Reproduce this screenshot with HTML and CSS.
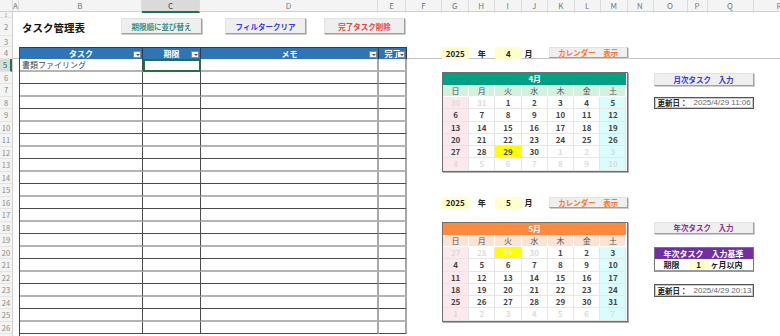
FILE: index.html
```html
<!DOCTYPE html>
<html>
<head>
    <title>タスク管理表</title>
    <link rel="stylesheet" href="styles.css">
</head>
<body>
    <div class="colheads">
        <div></div>
        <div class="col-a">A</div>
        <div>B</div>
        <div class="sel">C</div>
        <div>D</div>
        <div>E</div>
        <div>F</div>
        <div>G</div>
        <div>H</div>
        <div>I</div>
        <div>J</div>
        <div>K</div>
        <div>L</div>
        <div>M</div>
        <div>N</div>
        <div>O</div>
        <div>P</div>
        <div>Q</div>
        <div>R</div>
    </div>
    <div class="main">
        <div class="rowheads">
            <div class="short">1</div><div>2</div><div>3</div><div>4</div>
            <div class="sel">5</div><div>6</div><div>7</div><div>8</div>
            <div>9</div><div>10</div><div>11</div><div>12</div>
            <div>13</div><div>14</div><div>15</div><div>16</div>
            <div>17</div><div>18</div><div>19</div><div>20</div>
            <div>21</div><div>22</div><div>23</div><div>24</div>
            <div>25</div><div>26</div><div></div>
        </div>

        <div class="cells">
            <div class="freeze"></div>

            <!-- row 2: title and macro buttons -->
            <div class="toolbar">
                <div class="title">タスク管理表</div>
                <div class="btn btn-sort">期限順に並び替え</div>
                <div class="btn btn-filter">フィルタークリア</div>
                <div class="btn btn-delete">完了タスク削除</div>
            </div>

            <!-- task table -->
            <div class="tasks">
                <div class="th">タスク<span class="filter"></span></div>
                <div class="th">期限<span class="filter"></span></div>
                <div class="th">メモ<span class="filter"></span></div>
                <div class="th">完了<span class="filter"></span></div>

                <div class="td name">書類ファイリング</div><div class="td active"></div><div class="td"></div><div class="td"></div>
                <div class="td"></div><div class="td"></div><div class="td"></div><div class="td"></div>
                <div class="td"></div><div class="td"></div><div class="td"></div><div class="td"></div>
                <div class="td"></div><div class="td"></div><div class="td"></div><div class="td"></div>
                <div class="td"></div><div class="td"></div><div class="td"></div><div class="td"></div>
                <div class="td"></div><div class="td"></div><div class="td"></div><div class="td"></div>
                <div class="td"></div><div class="td"></div><div class="td"></div><div class="td"></div>
                <div class="td"></div><div class="td"></div><div class="td"></div><div class="td"></div>
                <div class="td"></div><div class="td"></div><div class="td"></div><div class="td"></div>
                <div class="td"></div><div class="td"></div><div class="td"></div><div class="td"></div>
                <div class="td"></div><div class="td"></div><div class="td"></div><div class="td"></div>
                <div class="td"></div><div class="td"></div><div class="td"></div><div class="td"></div>
                <div class="td"></div><div class="td"></div><div class="td"></div><div class="td"></div>
                <div class="td"></div><div class="td"></div><div class="td"></div><div class="td"></div>
                <div class="td"></div><div class="td"></div><div class="td"></div><div class="td"></div>
                <div class="td"></div><div class="td"></div><div class="td"></div><div class="td"></div>
                <div class="td"></div><div class="td"></div><div class="td"></div><div class="td"></div>
                <div class="td"></div><div class="td"></div><div class="td"></div><div class="td"></div>
                <div class="td"></div><div class="td"></div><div class="td"></div><div class="td"></div>
                <div class="td"></div><div class="td"></div><div class="td"></div><div class="td"></div>
                <div class="td"></div><div class="td"></div><div class="td"></div><div class="td"></div>
                <div class="td"></div><div class="td"></div><div class="td"></div><div class="td"></div>
            </div>

            <!-- April -->
            <div class="ym r4 year">2025</div>
            <div class="ym r4 unit-y">年</div>
            <div class="ym r4 month">4</div>
            <div class="ym r4 unit-m">月</div>
            <div class="btn btn-cal r4">カレンダー　表示</div>

            <div class="cal cal-apr">
                <div class="cal-head">4月</div>
                <div class="dow">日</div><div class="dow">月</div><div class="dow">火</div><div class="dow">水</div><div class="dow">木</div><div class="dow">金</div><div class="dow">土</div>
                <div class="sun off">30</div><div class="off">31</div><div>1</div><div>2</div><div>3</div><div>4</div><div class="sat">5</div>
                <div class="sun">6</div><div>7</div><div>8</div><div>9</div><div>10</div><div>11</div><div class="sat">12</div>
                <div class="sun">13</div><div>14</div><div>15</div><div>16</div><div>17</div><div>18</div><div class="sat">19</div>
                <div class="sun">20</div><div>21</div><div>22</div><div>23</div><div>24</div><div>25</div><div class="sat">26</div>
                <div class="sun">27</div><div>28</div><div class="today">29</div><div>30</div><div class="off">1</div><div class="off">2</div><div class="sat off">3</div>
                <div class="sun off">4</div><div class="off">5</div><div class="off">6</div><div class="off">7</div><div class="off">8</div><div class="off">9</div><div class="sat off">10</div>
            </div>

            <div class="btn btn-monthly">月次タスク　入力</div>
            <div class="updated upd-monthly"><b>更新日：</b><span>2025/4/29 11:06</span></div>

            <!-- May -->
            <div class="ym r16 year">2025</div>
            <div class="ym r16 unit-y">年</div>
            <div class="ym r16 month">5</div>
            <div class="ym r16 unit-m">月</div>
            <div class="btn btn-cal r16">カレンダー　表示</div>

            <div class="cal cal-may">
                <div class="cal-head">5月</div>
                <div class="dow">日</div><div class="dow">月</div><div class="dow">火</div><div class="dow">水</div><div class="dow">木</div><div class="dow">金</div><div class="dow">土</div>
                <div class="sun off">27</div><div class="off">28</div><div class="off today">29</div><div class="off">30</div><div>1</div><div>2</div><div class="sat">3</div>
                <div class="sun">4</div><div>5</div><div>6</div><div>7</div><div>8</div><div>9</div><div class="sat">10</div>
                <div class="sun">11</div><div>12</div><div>13</div><div>14</div><div>15</div><div>16</div><div class="sat">17</div>
                <div class="sun">18</div><div>19</div><div>20</div><div>21</div><div>22</div><div>23</div><div class="sat">24</div>
                <div class="sun">25</div><div>26</div><div>27</div><div>28</div><div>29</div><div>30</div><div class="sat">31</div>
                <div class="sun off">1</div><div class="off">2</div><div class="off">3</div><div class="off">4</div><div class="off">5</div><div class="off">6</div><div class="sat off">7</div>
            </div>

            <div class="btn btn-yearly">年次タスク　入力</div>
            <div class="criteria">
                <div class="crit-head">年次タスク　入力基準</div>
                <div class="crit-label">期限</div>
                <div class="crit-value">1</div>
                <div class="crit-unit">ヶ月以内</div>
            </div>
            <div class="updated upd-yearly"><b>更新日：</b><span>2025/4/29 20:13</span></div>
        </div>
    </div>
</body>
</html>
```

FILE: styles.css
```css
* {
    box-sizing: border-box;
}
body {
    margin: 0;
    width: 780px;
    height: 336px;
    overflow: hidden;
    font-family: "Noto Sans CJK JP", "Noto Sans", sans-serif;
    font-size: 8px;
    color: #333;
    background-color: #fff;
}

/* sheet frame: column letters and row numbers */
.colheads {
    display: grid;
    grid-template-columns: 13px 6px 123px 58px 178px 28px 36px repeat(7, 26.5px) 26px 34px 20px 46px 52px;
    height: 12px;
    background-color: #f4f4f4;
    border-bottom: 1px solid #d0d0d0;
}
.colheads div {
    border-right: 1px solid #dcdcdc;
    color: #777;
    font-size: 8px;
    line-height: 11px;
    text-align: center;
    white-space: nowrap;
}
.colheads .col-a {
    text-align: left;
    overflow: visible;
}
.colheads .sel {
    background-color: #dadada;
    border-bottom: 2px solid #217346;
    color: #444;
}
.main {
    display: flex;
    height: 324px;
    overflow: hidden;
}
.rowheads {
    flex: none;
    width: 13px;
    display: grid;
    grid-template-rows: 6px 18px 11px 12px repeat(23, 12.5px);
    background-color: #f4f4f4;
    border-right: 1px solid #d0d0d0;
}
.rowheads div {
    overflow: hidden;
    color: #888;
    font-size: 7.5px;
    text-align: center;
    display: flex;
    align-items: center;
    justify-content: center;
    border-bottom: 1px solid #e4e4e4;
}
.rowheads .short {
    font-size: 5px;
    line-height: 5px;
}
.rowheads .sel {
    background-color: #dadada;
    border-right: 2px solid #217346;
    color: #217346;
}

.cells {
    flex: none;
    display: grid;
    grid-template-columns: 6px 123px 58px 178px 28px 36px repeat(7, 26.5px) 26px 34px 20px 46px 52px;
    grid-template-rows: 6px 18px 11px 12px repeat(23, 12.5px);
}
.freeze {
    grid-column: 1 / -1;
    grid-row: 4;
    border-bottom: 1px solid #c4c4c4;
}

/* title row */
.toolbar {
    grid-column: 2 / 6;
    grid-row: 2;
    display: flex;
    align-items: flex-start;
}
.title {
    width: 102px;
    padding: 1px 0 0 3px;
    font-size: 10.5px;
    font-weight: bold;
    color: #111;
    line-height: 17px;
}
.btn {
    background-color: #efefef;
    border: 1px solid #e2e2e2;
    border-right-color: #a0a0a0;
    border-bottom-color: #a0a0a0;
    box-shadow: 1px 1px 0 #cfcfcf;
    font-weight: bold;
    font-size: 7.5px;
    display: flex;
    align-items: center;
    justify-content: center;
    white-space: nowrap;
}
.toolbar .btn {
    width: 81px;
    height: 16px;
}
.btn-sort {
    color: #3b8f80;
}
.btn-filter {
    margin-left: 23px;
    color: #3636f0;
}
.btn-delete {
    margin-left: 18px;
    color: #ff3a3a;
}

/* task list */
.tasks {
    grid-column: 2 / 6;
    grid-row: 4 / 28;
    display: grid;
    grid-template-columns: 123px 58px 178px 28px;
    grid-template-rows: 12px repeat(23, 12.5px);
    border-left: 1px solid #444;
}
.th {
    position: relative;
    background-color: #2f75b5;
    color: #fff;
    font-weight: bold;
    text-align: center;
    line-height: 11px;
    border-top: 1px solid #3a3a3a;
    border-right: 1px solid #1f3f5f;
    white-space: nowrap;
    overflow: hidden;
}
.filter {
    position: absolute;
    right: 1px;
    top: 3px;
    width: 8px;
    height: 7px;
    background-color: #f2f2f2;
    border: 1px solid #8a8a8a;
}
.filter::after {
    content: "";
    position: absolute;
    left: 1.5px;
    top: 2px;
    border-left: 2px solid transparent;
    border-right: 2px solid transparent;
    border-top: 2px solid #555;
}
.td {
    border-right: 1px solid #4a4a4a;
    border-bottom: 1px solid #4a4a4a;
    white-space: nowrap;
    line-height: 11px;
}
.td:nth-child(8n+5),
.td:nth-child(8n+6),
.td:nth-child(8n+7),
.td:nth-child(8n+8) {
    border-bottom: 2px solid #b4b4b4;
}
.td:nth-child(4n+3),
.td:nth-child(4n+4) {
    border-right: 2px solid #a8a8a8;
}
.td.name {
    padding-left: 2px;
    color: #444;
}
.td.active {
    border: 2px solid #217346;
}

/* year / month inputs */
.ym {
    font-weight: bold;
    color: #222;
    display: flex;
    align-items: center;
    justify-content: center;
}
.r4 {
    grid-row: 4;
}
.r16 {
    grid-row: 16;
}
.year {
    grid-column: 7;
    background-color: #ffffcc;
}
.unit-y {
    grid-column: 8;
}
.month {
    grid-column: 9;
    background-color: #ffffcc;
}
.unit-m {
    grid-column: 10;
    justify-content: flex-start;
    padding-left: 3px;
}
.btn-cal {
    grid-column: 11 / 14;
    color: #ff7a2a;
    margin: 0 0 1px 1px;
}

/* calendars */
.cal {
    grid-column: 7 / 14;
    display: grid;
    grid-template-columns: repeat(7, 1fr);
    grid-template-rows: repeat(8, 1fr);
    border: 1px solid #6e6e6e;
    box-shadow: 1px 1px 0 #b0b0b0;
}
.cal-apr {
    grid-row: 6 / 14;
}
.cal-may {
    grid-row: 18 / 26;
}
.cal div {
    display: flex;
    align-items: center;
    justify-content: center;
    font-weight: bold;
    color: #444;
    border-right: 1px solid #e6e6e6;
    border-bottom: 1px solid #e6e6e6;
}
.cal .cal-head {
    grid-column: 1 / -1;
    color: #fff;
    border: none;
}
.cal-apr .cal-head {
    background-color: #00a085;
}
.cal-may .cal-head {
    background-color: #ff8a3d;
}
.cal .dow {
    font-weight: normal;
    color: #555;
    border-color: #fff;
}
.cal-apr .dow {
    background-color: #d3f1de;
}
.cal-may .dow {
    background-color: #fce3d3;
}
.cal .sun {
    background-color: #fde9ed;
}
.cal .sat {
    background-color: #dafcfc;
}
.cal .off {
    color: #dcdcdc;
}
.cal .today {
    background-color: #ffff00;
}
.cal .off.today {
    color: #f4f4c0;
}

/* right side panel */
.btn-monthly {
    grid-column: 15 / 18;
    grid-row: 6;
    color: #3636f0;
    margin-top: 1px;
    height: 13px;
}
.btn-yearly {
    grid-column: 15 / 18;
    grid-row: 18;
    color: #8c2c9c;
    height: 12px;
}
.updated {
    grid-column: 15 / 18;
    display: flex;
    align-items: center;
    border: 1px solid #555;
    box-shadow: inset 0 0 0 1px #c8c8c8;
    font-size: 7.5px;
    padding-left: 3px;
    white-space: nowrap;
}
.updated b {
    color: #222;
    width: 36px;
}
.updated span {
    font-family: "Liberation Sans", Arial, sans-serif;
    font-size: 8px;
    color: #666;
}
.upd-monthly {
    grid-row: 8;
}
.upd-yearly {
    grid-row: 23;
}
.criteria {
    grid-column: 15 / 18;
    grid-row: 20 / 22;
    display: grid;
    grid-template-columns: 34px 20px 1fr;
    grid-template-rows: 1fr 1fr;
    border: 1px solid #777;
    border-bottom: 2px solid #999;
    font-weight: bold;
    font-size: 8px;
}
.criteria div {
    display: flex;
    align-items: center;
    justify-content: center;
    color: #222;
}
.crit-head {
    grid-column: 1 / -1;
    background-color: #7030a0;
    color: #fff !important;
}
.crit-value {
    background-color: #ffffcc;
}
.criteria .crit-unit {
    justify-content: flex-start;
    padding-left: 2px;
}
```
